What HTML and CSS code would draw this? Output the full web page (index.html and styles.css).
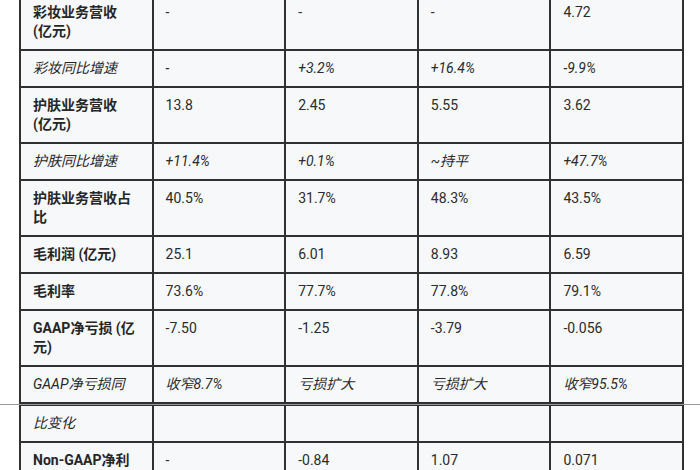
FILE: index.html
```html
<!DOCTYPE html>
<html lang="zh">
<head>
<meta charset="utf-8">
<link rel="stylesheet" href="styles.css">
</head>
<body>
<div class="page">
  <table class="fin fin-top">
    <colgroup><col><col><col><col><col></colgroup>
    <tbody>
      <tr><th>彩妆业务营收 <span class="unit">(亿元)</span></th><td>-</td><td>-</td><td>-</td><td>4.72</td></tr>
      <tr class="sub"><th>彩妆同比增速</th><td>-</td><td>+3.2%</td><td>+16.4%</td><td>-9.9%</td></tr>
      <tr><th>护肤业务营收 <span class="unit">(亿元)</span></th><td>13.8</td><td>2.45</td><td>5.55</td><td>3.62</td></tr>
      <tr class="sub"><th>护肤同比增速</th><td>+11.4%</td><td>+0.1%</td><td>~持平</td><td>+47.7%</td></tr>
      <tr><th>护肤业务营收占比</th><td>40.5%</td><td>31.7%</td><td>48.3%</td><td>43.5%</td></tr>
      <tr><th>毛利润 (亿元)</th><td>25.1</td><td>6.01</td><td>8.93</td><td>6.59</td></tr>
      <tr><th>毛利率</th><td>73.6%</td><td>77.7%</td><td>77.8%</td><td>79.1%</td></tr>
      <tr><th>GAAP净亏损 (亿元)</th><td>-7.50</td><td>-1.25</td><td>-3.79</td><td>-0.056</td></tr>
      <tr class="sub"><th>GAAP净亏损同</th><td>收窄8.7%</td><td>亏损扩大</td><td>亏损扩大</td><td>收窄95.5%</td></tr>
    </tbody>
  </table>
  <div class="cut"></div>
  <table class="fin fin-bottom">
    <colgroup><col><col><col><col><col></colgroup>
    <tbody>
      <tr class="sub"><th>比变化</th><td></td><td></td><td></td><td></td></tr>
      <tr><th>Non-GAAP净利润 (亿元)</th><td>-</td><td>-0.84</td><td>1.07</td><td>0.071</td></tr>
    </tbody>
  </table>
</div>
</body>
</html>
```

FILE: styles.css
```css
html, body {
  margin: 0;
  padding: 0;
  background: #ffffff;
}

.page {
  width: 700px;
  height: 470px;
  overflow: hidden;
  font-family: Roboto, "Noto Sans CJK SC", sans-serif;
  font-size: 14px;
  line-height: 19px;
  color: #2b2b2b;
}

.fin {
  width: 665px;
  margin-left: 19px;
  border-collapse: collapse;
  table-layout: fixed;
  background: #f7f8fa;
}

.fin col {
  width: 20%;
}

.fin-top {
  margin-top: -7px;
}

.fin th,
.fin td {
  border: 2px solid #303030;
  padding: 8px 12px 8px 12px;
  text-align: left;
  vertical-align: top;
  height: 19px;
}

.fin th {
  font-weight: 700;
  color: #262626;
}

.fin td {
  font-weight: 400;
}

.fin .unit {
  white-space: nowrap;
}

.fin tr.sub th,
.fin tr.sub td {
  font-style: italic;
  font-weight: 400;
}

.cut {
  height: 1px;
  background: #9a9a9a;
}

.fin-bottom tr:first-child th,
.fin-bottom tr:first-child td {
  border-top-width: 1px;
}
```
